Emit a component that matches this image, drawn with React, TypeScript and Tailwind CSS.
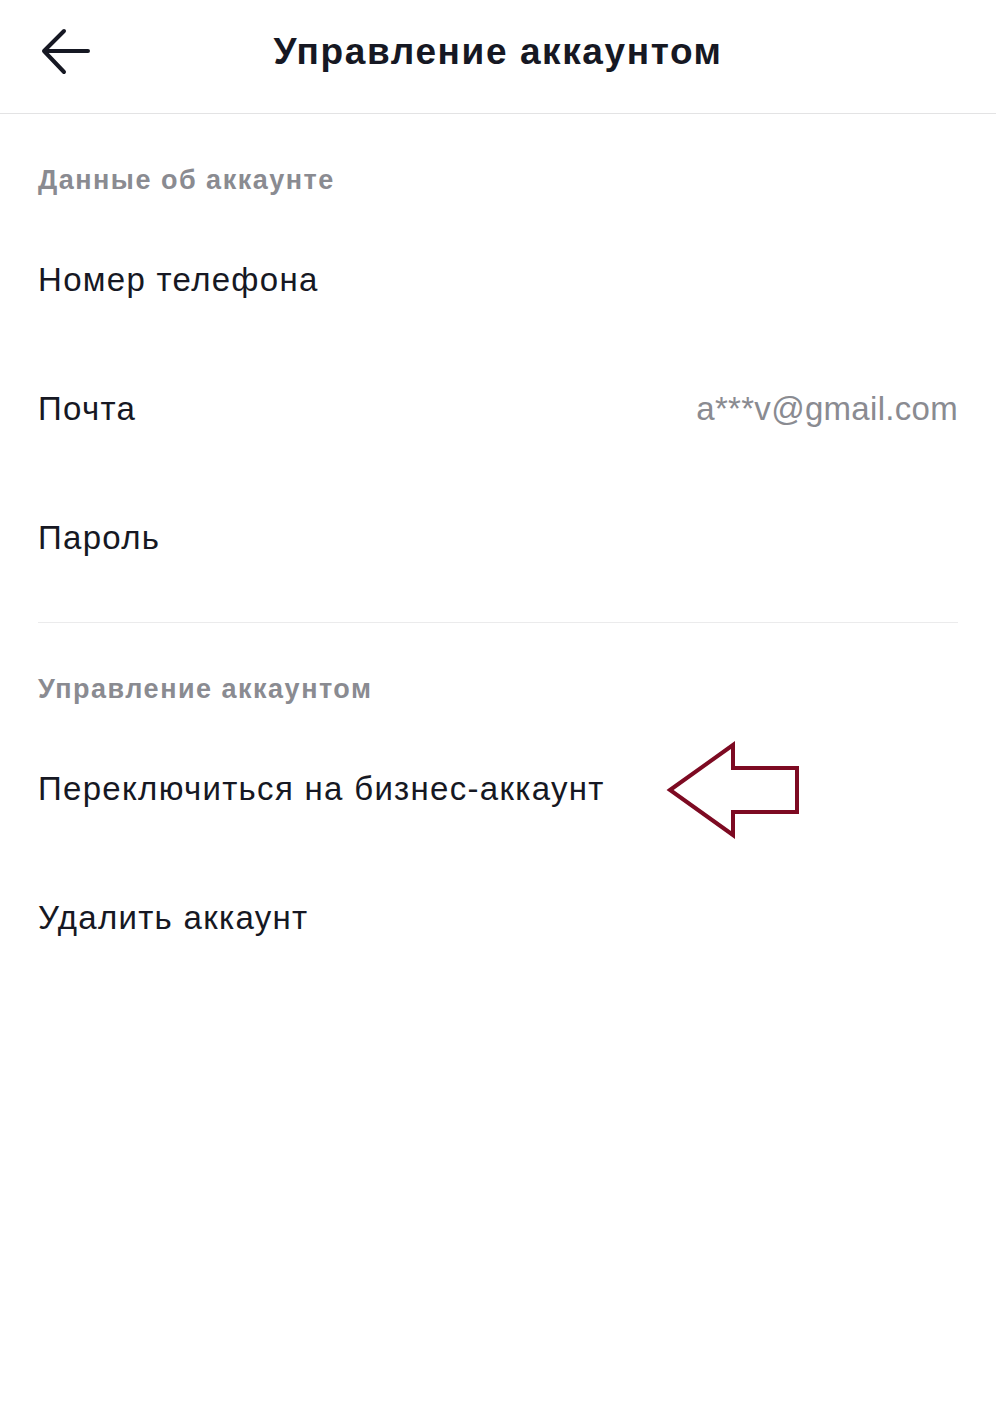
const font = { fontFamily: '"Liberation Sans", Arial, sans-serif' };

const Row = ({ label, value }: { label: string; value?: string }) => (
    <div className="flex h-[129px] items-center justify-between">
        <span className="text-[33px] tracking-[1.3px] text-[#161823]">{label}</span>
        {value && <span className="text-[33px] tracking-[0.3px] text-[#8a8b91]">{value}</span>}
    </div>
);

const SectionLabel = ({ children }: { children: string }) => (
    <div className="h-[101px] pt-[48px]">
        <div className="text-[27px] font-semibold leading-[36px] tracking-[1.5px] text-[#8a8b91]">{children}</div>
    </div>
);

const App = () => {
    return (
        <div className="relative min-h-[1427px] w-[996px] bg-white" style={font}>
            <header className="relative flex h-[114px] items-center justify-center border-b border-[#e3e3e4]">
                <svg className="absolute left-[38px] top-[27px]" width="54" height="50" viewBox="0 0 54 50" fill="none">
                    <path d="M50 24H7M26 4L6 24l20 21" stroke="#161823" strokeWidth="4" strokeLinecap="round" strokeLinejoin="round" />
                </svg>
                <h1 className="mt-[-10px] text-[37px] font-bold tracking-[1.6px] text-[#161823]">Управление аккаунтом</h1>
            </header>

            <div className="px-[38px]">
                <SectionLabel>Данные об аккаунте</SectionLabel>
                <Row label="Номер телефона" />
                <Row label="Почта" value="a***v@gmail.com" />
                <Row label="Пароль" />
                <div className="h-[20px]" />
                <div className="h-px bg-[#ebebec]" />

                <SectionLabel>Управление аккаунтом</SectionLabel>
                <Row label="Переключиться на бизнес-аккаунт" />
                <Row label="Удалить аккаунт" />
            </div>

            {/* annotation arrow */}
            <svg className="absolute left-[664px] top-[740px]" width="140" height="100" viewBox="0 0 140 100" fill="none">
                <path d="M6 50L69 5v23h64v44H69v23z" stroke="#7d0a22" strokeWidth="4" strokeLinejoin="miter" />
            </svg>
        </div>
    );
};

export default App;
